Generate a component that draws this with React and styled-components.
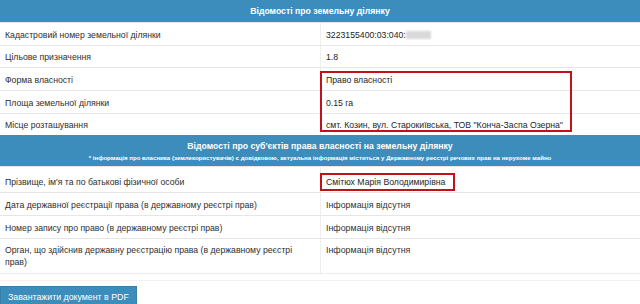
import React from "react";
import styled, { createGlobalStyle } from "styled-components";

const GlobalStyle = createGlobalStyle`
    body {
        margin: 0;
        background: #fff;
        font-family: "Liberation Sans", Arial, sans-serif;
        color: #333;
    }
`;

const Page = styled.div`
    width: 640px;
    display: flex;
    flex-direction: column;
    align-items: flex-start;
`;

const Section = styled.div`
    width: 100%;
    display: grid;
    grid-template-columns: 320px 1fr;
`;

const Header = styled.div`
    grid-column: 1 / 3;
    grid-row: 1;
    background: #3c8dbc;
    color: #fff;
    text-align: center;
    font-weight: 700;
    font-size: 8.7px;
    line-height: 12px;
    padding: ${(p) => p.$pad || "5px 0"};
    display: flex;
    flex-direction: column;
    gap: 2px;
`;

const Note = styled.div`
    font-size: 6.1px;
    line-height: 8px;
    font-weight: 700;
`;

const Cell = styled.div`
    grid-row: ${(p) => p.$row};
    font-size: 8.7px;
    line-height: 12px;
    padding: ${(p) => p.$pad || "5.5px 5px 4.2px"};
    border-top: 1px solid #e6e6e6;
    min-height: ${(p) => p.$h || "12px"};
`;

const Label = styled(Cell)`
    grid-column: 1;
    color: #2e2e2e;
`;

const Value = styled(Cell)`
    grid-column: 2;
    border-left: 1px solid #eee;
    color: ${(p) => (p.$muted ? "#333" : "#1e1e1e")};
    font-size: ${(p) => (p.$muted ? "8.9px" : "8.7px")};
`;

const Redacted = styled.span`
    display: inline-block;
    width: 25px;
    height: 8px;
    margin-left: 0;
    vertical-align: -1px;
    background: #d9d9d9;
    filter: blur(0.8px);
`;

// red annotation frame drawn over value cells
const Mark = styled.div`
    grid-column: 2;
    grid-row: ${(p) => p.$rows};
    justify-self: start;
    width: ${(p) => p.$w}px;
    margin: ${(p) => p.$m};
    border: 2px solid #c1121c;
    z-index: 1;
    pointer-events: none;
`;

const Footer = styled.div`
    width: 100%;
    height: 6px;
    border-top: 1px solid #ececec;
    border-bottom: 1px solid #f2f2f2;
`;

const PdfButton = styled.button`
    margin-top: 5px;
    background: #3c8dbc;
    border: 1px solid #367fa9;
    color: #fff;
    font-family: "Liberation Sans", Arial, sans-serif;
    font-size: 8.8px;
    line-height: 12px;
    padding: 4px 7px 6px;
    cursor: pointer;
`;

const plotRows = [
    ["Кадастровий номер земельної ділянки", <>3223155400:03:040:<Redacted /></>],
    ["Цільове призначення", "1.8"],
    ["Форма власності", "Право власності"],
    ["Площа земельної ділянки", "0.15 га"],
    ["Місце розташування", "смт. Козин, вул. Старокиївська, ТОВ \"Конча-Заспа Озерна\""],
];

const ownerRows = [
    ["Дата державної реєстрації права (в державному реєстрі прав)", "Інформація відсутня"],
    ["Номер запису про право (в державному реєстрі прав)", "Інформація відсутня"],
    ["Орган, що здійснив державну реєстрацію права (в державному реєстрі прав)", "Інформація відсутня", "24px"],
];

const App = () => {
    return (
        <Page>
            <GlobalStyle />
            <Section>
                <Header>Відомості про земельну ділянку</Header>
                {plotRows.map(([label, value], i) => (
                    <React.Fragment key={i}>
                        <Label $row={i + 2}>{label}</Label>
                        <Value $row={i + 2}>{value}</Value>
                    </React.Fragment>
                ))}
                <Mark $rows="4 / 7" $w={248} $m="4px 0 3px" />
            </Section>
            <Section>
                <Header $pad="5px 0 4px">
                    Відомості про суб'єктів права власності на земельну ділянку
                    <Note>
                        * інформація про власника (землекористувачів) є довідковою, актуальна інформація міститься у Державному реєстрі речових прав на нерухоме майно
                    </Note>
                </Header>
                <Label $row={2} $pad="9px 5px 4px">Прізвище, ім'я та по батькові фізичної особи</Label>
                <Value $row={2} $pad="9px 5px 4px">Смітюх Марія Володимирівна</Value>
                <Mark $rows="2" $w={131} $m="7px 0 1px" />
                {ownerRows.map(([label, value, h], i) => (
                    <React.Fragment key={i}>
                        <Label $row={i + 3} $h={h}>{label}</Label>
                        <Value $row={i + 3} $h={h} $muted>{value}</Value>
                    </React.Fragment>
                ))}
            </Section>
            <Footer />
            <PdfButton>Завантажити документ в PDF</PdfButton>
        </Page>
    );
};

export default App;
